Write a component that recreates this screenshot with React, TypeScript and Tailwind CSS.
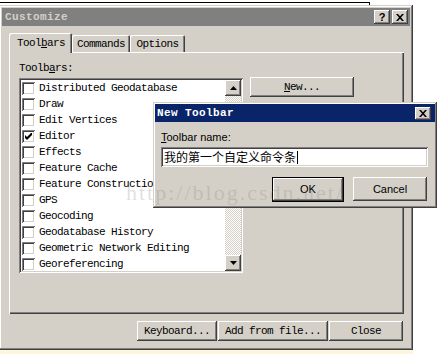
const raised =
  'bg-[#d4d0c8] shadow-[inset_-1px_-1px_#404040,inset_1px_1px_#ffffff,inset_-2px_-2px_#808080,inset_2px_2px_#d4d0c8]';
const sunken =
  'shadow-[inset_1px_1px_#808080,inset_-1px_-1px_#ffffff,inset_2px_2px_#404040,inset_-2px_-2px_#d4d0c8]';
const mono = "font-['Liberation_Mono',monospace] text-[11px] tracking-[-0.6px] text-black";
const sans = "font-['Liberation_Sans',Arial,sans-serif] text-[11px] text-black";

const toolbars = [
  'Distributed Geodatabase',
  'Draw',
  'Edit Vertices',
  'Editor',
  'Effects',
  'Feature Cache',
  'Feature Construction',
  'GPS',
  'Geocoding',
  'Geodatabase History',
  'Geometric Network Editing',
  'Georeferencing',
];

function Checkbox({ checked }: { checked?: boolean }) {
  return (
    <div className={`w-[13px] h-[13px] bg-white flex items-center justify-center shrink-0 ${sunken}`}>
      {checked && (
        <svg width="7" height="7" viewBox="0 0 7 7">
          <path d="M0 2v3l2 2l5-5v-3l-5 5z" fill="#000" />
        </svg>
      )}
    </div>
  );
}

function Arrow({ up }: { up?: boolean }) {
  return (
    <div className={`w-[16px] h-[16px] flex items-center justify-center ${raised}`}>
      <svg width="7" height="4" viewBox="0 0 7 4">
        <path d={up ? 'M3.5 0L7 4H0z' : 'M0 0h7L3.5 4z'} fill="#000" />
      </svg>
    </div>
  );
}

function CustomizeWindow() {
  return (
    <div className="absolute left-[-1px] top-[5px] w-[414px] h-[345px] p-[3px] bg-[#d4d0c8] shadow-[inset_-1px_-1px_#404040,inset_1px_1px_#d4d0c8,inset_-2px_-2px_#808080,inset_2px_2px_#ffffff] flex flex-col">
      {/* title bar (inactive) */}
      <div className="h-[18px] bg-[#808080] flex items-center pl-[3px] pr-[2px]">
        <span className="font-['Liberation_Mono',monospace] text-[11px] font-bold tracking-[0.4px] text-[#d4d0c8]">
          Customize
        </span>
        <div className="ml-auto flex">
          <div className={`w-[16px] h-[14px] flex items-center justify-center ${raised}`}>
            <span className="font-['Liberation_Sans',sans-serif] text-[11px] font-bold leading-none text-black">?</span>
          </div>
          <div className={`ml-[2px] w-[16px] h-[14px] flex items-center justify-center ${raised}`}>
            <svg width="8" height="7" viewBox="0 0 8 7">
              <path d="M0 0h2l2 2.2L6 0h2L5 3.5L8 7H6L4 4.8L2 7H0l3-3.5z" fill="#000" />
            </svg>
          </div>
        </div>
      </div>

      <div className="flex-1 flex flex-col pt-[7px] pl-[7px] pr-[6px]">
        {/* tabs */}
        <div className="h-[19px] flex items-end relative z-10">
          <div className="h-[20px] w-[63px] -mb-px bg-[#d4d0c8] rounded-t-[2px] shadow-[inset_1px_1px_#ffffff,inset_-1px_0_#404040,inset_-2px_0_#808080] flex items-center pl-[8px] pt-[1px]">
            <span className={mono}>
              Tool<span className="underline">b</span>ars
            </span>
          </div>
          <div className="h-[17px] w-[58px] rounded-t-[2px] shadow-[inset_1px_1px_#ffffff,inset_-1px_0_#404040,inset_-2px_0_#808080] flex items-center justify-center pt-[2px]">
            <span className={mono}>Commands</span>
          </div>
          <div className="h-[17px] w-[55px] rounded-t-[2px] shadow-[inset_1px_1px_#ffffff,inset_-1px_0_#404040,inset_-2px_0_#808080] flex items-center justify-center pt-[2px]">
            <span className={mono}>Options</span>
          </div>
        </div>

        {/* tab panel */}
        <div className="h-[262px] shadow-[inset_1px_1px_#ffffff,inset_-1px_-1px_#404040,inset_-2px_-2px_#808080] pt-[10px] pl-[10px] flex gap-[7px]">
          <div className="flex flex-col">
            <div className={`${mono} leading-[12px]`}>
              Toolb<span className="underline">a</span>rs:
            </div>
            <div className={`mt-[4px] w-[224px] h-[195px] bg-white p-[2px] flex overflow-hidden ${sunken}`}>
              <div className="flex-1 flex flex-col">
                {toolbars.map((name) => (
                  <div key={name} className="h-[16px] shrink-0 flex items-center gap-[4px] pl-[1px]">
                    <Checkbox checked={name === 'Editor'} />
                    <span className={`${mono} whitespace-nowrap`}>{name}</span>
                  </div>
                ))}
              </div>
              <div className="w-[16px] flex flex-col bg-[repeating-conic-gradient(#d4d0c8_0%_25%,#ffffff_0%_50%)] bg-[length:2px_2px]">
                <Arrow up />
                <div className="flex-1" />
                <Arrow />
              </div>
            </div>
          </div>
          <div className="pt-[15px]">
            <div className={`w-[104px] h-[20px] flex items-center justify-center ${raised}`}>
              <span className={mono}>
                <span className="underline">N</span>ew...
              </span>
            </div>
          </div>
        </div>

        {/* bottom buttons */}
        <div className="mt-[7px] flex justify-end gap-px pr-px">
          <div className={`w-[80px] h-[20px] flex items-center justify-center ${raised}`}>
            <span className={mono}>Keyboard...</span>
          </div>
          <div className={`w-[110px] h-[20px] flex items-center justify-center ${raised}`}>
            <span className={mono}>Add from file...</span>
          </div>
          <div className={`w-[74px] h-[20px] flex items-center justify-center ${raised}`}>
            <span className={mono}>Close</span>
          </div>
        </div>
      </div>
    </div>
  );
}

function NewToolbarDialog() {
  return (
    <div className="absolute left-[153px] top-[102px] w-[284px] h-[106px] p-[2px] bg-[#d4d0c8] shadow-[inset_-1px_-1px_#404040,inset_1px_1px_#d4d0c8,inset_-2px_-2px_#808080,inset_2px_2px_#ffffff] flex flex-col z-20">
      <div className="h-[18px] bg-[#0a246a] flex items-center pl-[2px] pr-[4px]">
        <span className="font-['Liberation_Mono',monospace] text-[11px] font-bold tracking-[0.4px] text-white">
          New Toolbar
        </span>
        <div className={`ml-auto w-[16px] h-[13px] flex items-center justify-center ${raised}`}>
          <svg width="8" height="7" viewBox="0 0 8 7">
            <path d="M0 0h2l2 2.2L6 0h2L5 3.5L8 7H6L4 4.8L2 7H0l3-3.5z" fill="#000" />
          </svg>
        </div>
      </div>
      <div className="flex-1 flex flex-col pl-[6px] pr-[7px] pt-[9px]">
        <div className={`${sans} leading-[12px]`}>
          <span className="underline">T</span>oolbar name:
        </div>
        <div className={`mt-[4px] h-[20px] bg-white flex items-center px-[3px] ${sunken}`}>
          <span className="font-['Noto_Sans_CJK_SC',sans-serif] text-[12px] leading-none text-black">
            我的第一个自定义命令条
          </span>
          <span className="ml-px w-px h-[13px] bg-black" />
        </div>
        <div className="mt-[10px] flex justify-end gap-[9px] pr-px">
          <div className="w-[72px] h-[25px] border border-black">
            <div className={`w-full h-full flex items-center justify-center ${raised}`}>
              <span className={sans}>OK</span>
            </div>
          </div>
          <div className={`w-[74px] h-[24px] flex items-center justify-center ${raised}`}>
            <span className={sans}>Cancel</span>
          </div>
        </div>
      </div>
    </div>
  );
}

export default function App() {
  return (
    <div className="relative w-[443px] h-[354px] bg-white overflow-hidden">
      <div className="absolute left-0 top-[2px] w-[370px] h-[4px] border-t border-r border-black" />
      <CustomizeWindow />
      <NewToolbarDialog />
      <div className="absolute left-0 top-[350px] w-[413px] h-[4px] bg-[#fdf6dc]" />
      <div className="absolute left-[126px] top-[176px] z-30 pointer-events-none font-['Liberation_Serif',serif] text-[22px] tracking-[2px] text-[#808080]/25 whitespace-nowrap">
        http://blog.csdn.net/
      </div>
    </div>
  );
}
